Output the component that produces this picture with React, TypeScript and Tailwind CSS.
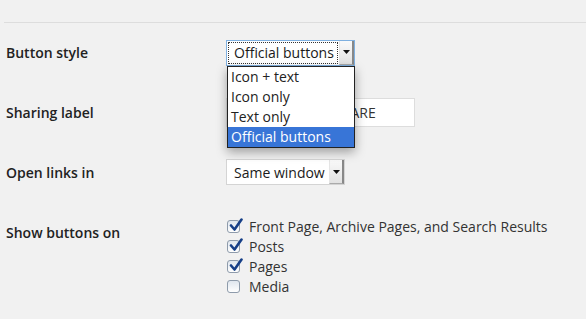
interface SelectBoxProps {
  value: string;
  width: string;
  focused?: boolean;
}

function SelectBox({ value, width, focused }: SelectBoxProps) {
  return (
    <div
      className={`flex h-[26px] ${width} border bg-white ${
        focused ? 'border-[#7fb0e0]' : 'border-[#d4d4d4]'
      }`}
    >
      <div className="min-w-0 flex-1 p-[1px]">
        <div
          className={`flex h-full items-center overflow-hidden whitespace-nowrap pl-[5px] text-[14px] text-[#1a1a1a] ${
            focused ? 'border border-dotted border-[#333]' : 'border border-transparent'
          }`}
        >
          {value}
        </div>
      </div>
      <div className="flex w-[15px] shrink-0 items-center justify-center border-l border-[#e5e5e5] border-r-2 border-r-[#888] border-b border-b-[#aaa] bg-gradient-to-b from-[#fafafa] to-[#e2e2e2]">
        <svg width="7" height="4" viewBox="0 0 7 4">
          <path d="M0 0h7L3.5 4z" fill="#111" />
        </svg>
      </div>
    </div>
  );
}

function CheckRow({ label, checked }: { label: string; checked: boolean }) {
  return (
    <div className="flex h-[20px] items-center">
      <div className="relative h-[13px] w-[13px] rounded-[3px] border border-[#8e9bab] bg-gradient-to-b from-[#dfe6ee] to-white">
        {checked && (
          <svg className="absolute left-[1px] top-[-3px]" width="14" height="14" viewBox="0 0 14 14">
            <path d="M2 7.5 L5.5 11.5 L12.5 1.5" stroke="#163f87" strokeWidth="2.6" fill="none" strokeLinecap="round" strokeLinejoin="round" />
          </svg>
        )}
      </div>
      <span className="ml-[9px] text-[14px] text-[#333]">{label}</span>
    </div>
  );
}

export default function App() {
  const options = ['Icon + text', 'Icon only', 'Text only', 'Official buttons'];

  return (
    <div
      className="relative h-[319px] w-[586px] overflow-hidden bg-[#f1f1f1]"
      style={{ fontFamily: '"Open Sans", "Liberation Sans", sans-serif' }}
    >
      <div className="ml-[4px] mt-[22px] border-t border-[#dddddd]" />

      {/* Button style */}
      <div className="flex h-[59px] items-center">
        <div className="w-[226px] pl-[6px] text-[14px] font-semibold text-[#222]">Button style</div>
        <div className="relative">
          <SelectBox value="Official buttons" width="w-[129px]" focused />
          <div className="absolute left-[1px] top-[26px] z-10 w-[128px] border border-[#222] bg-white shadow-[0_4px_10px_rgba(0,0,0,0.35)]">
            {options.map((opt, i) => (
              <div
                key={opt}
                className={`flex h-[20px] items-center pl-[3px] text-[14px] ${
                  i === options.length - 1 ? 'bg-[#3875d7] text-white' : 'text-[#222]'
                }`}
              >
                {opt}
              </div>
            ))}
          </div>
        </div>
      </div>

      {/* Sharing label */}
      <div className="flex h-[60px] items-center">
        <div className="w-[226px] pl-[6px] text-[14px] font-semibold text-[#222]">Sharing label</div>
        <div className="flex h-[29px] w-[189px] items-center border border-[#dddddd] bg-white pl-[4px] text-[14px] text-[#333]">
          CLICK HERE TO SHARE
        </div>
      </div>

      {/* Open links in */}
      <div className="flex h-[60px] items-center">
        <div className="w-[226px] pl-[6px] text-[14px] font-semibold text-[#222]">Open links in</div>
        <SelectBox value="Same window" width="w-[119px]" />
      </div>

      {/* Show buttons on */}
      <div className="flex">
        <div className="w-[226px] pl-[6px] pt-[20px] text-[14px] font-semibold text-[#222]">Show buttons on</div>
        <div className="flex flex-col pl-[1px] pt-[14px]">
          <CheckRow label="Front Page, Archive Pages, and Search Results" checked />
          <CheckRow label="Posts" checked />
          <CheckRow label="Pages" checked />
          <CheckRow label="Media" checked={false} />
        </div>
      </div>
    </div>
  );
}
